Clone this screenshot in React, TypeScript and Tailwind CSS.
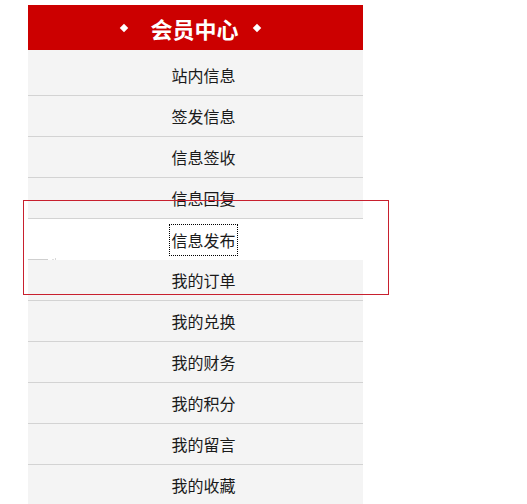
import React from 'react';

const items = [
  "站内信息",
  "签发信息",
  "信息签收",
  "信息回复",
  "信息发布",
  "我的订单",
  "我的兑换",
  "我的财务",
  "我的积分",
  "我的留言",
  "我的收藏"
];

const Diamond = () => <span className="block w-[6px] h-[6px] bg-white rotate-45" />;

export default function App() {
  return (
    <div
      className="relative w-[527px] h-[504px] overflow-hidden bg-white"
      style={{ fontFamily: '"Noto Sans CJK SC", "Noto Sans", sans-serif' }}
    >
      <div className="ml-[28px] pt-[5px] w-[335px]">
        <div className="h-[45px] bg-[#cc0000] flex items-center justify-center pr-[10px]">
          <Diamond />
          <span className="ml-[23px] mr-[15px] text-[22px] font-bold text-white leading-none">会员中心</span>
          <Diamond />
        </div>
        <ul>
          {items.map((name, i) => {
            const active = name === "信息发布";
            return (
              <li
                key={name}
                className={
                  "relative flex items-center justify-center pl-[16px] text-[16px] text-[#1a1a1a] " +
                  (i === 0 ? "h-[46px] pt-[5px] " : "h-[41px] ") +
                  (active ? "bg-white" : "bg-[#f4f4f4] border-b border-[#d3d3d3]")
                }
              >
                {active ? (
                  <>
                    <span className="inline-flex items-center h-[30px] px-[1px] outline-1 outline-dotted outline-black leading-none">
                      {name}
                    </span>
                    <span className="absolute left-0 bottom-0 h-px w-[20px] bg-[#cfcfcf]" />
                    <span className="absolute left-[24px] bottom-0 h-px w-[2px] bg-[#e0e0e0]" />
                    <span className="absolute left-[27px] bottom-[-1px] h-[3px] w-px bg-[#d8d8d8]" />
                  </>
                ) : (
                  <span className="leading-none">{name}</span>
                )}
              </li>
            );
          })}
        </ul>
      </div>
      <div className="absolute left-[23px] top-[200px] w-[366px] h-[95px] border border-[#c8202e]" />
    </div>
  );
}
